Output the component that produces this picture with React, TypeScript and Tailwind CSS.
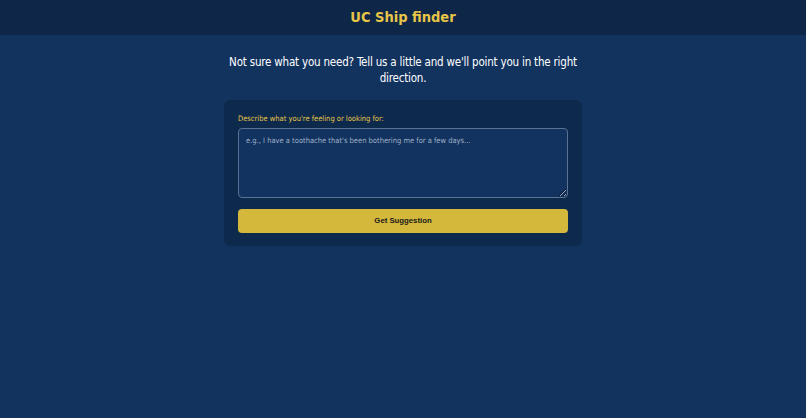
import React from "react";

const cond = '"DejaVu Sans Condensed", "DejaVu Sans", Tahoma, sans-serif';

export default function App() {
  return (
    <div className="min-h-screen w-full bg-[#13335f] flex flex-col" style={{ fontFamily: cond }}>
      <header className="h-[35px] bg-[#0e2748] flex items-center justify-center">
        <h1 className="text-[14.5px] font-bold text-[#e8c547]">UC Ship finder</h1>
      </header>
      <main className="flex flex-col items-center pt-[19px]">
        <p className="w-[370px] text-center text-[11.5px] leading-[16px] tracking-[-0.2px] text-white">
          Not sure what you need? Tell us a little and we'll point you in the right direction.
        </p>
        <div className="mt-[14px] w-[358px] rounded-[6px] bg-[#0d2a4d] px-[14px] pt-[14px] pb-[13px] flex flex-col">
          <label className="text-[7.5px] leading-[10px] text-[#e8c547]">Describe what you're feeling or looking for:</label>
          <textarea
            className="mt-[4px] h-[70px] w-full resize-y rounded-[4px] border border-[#58728f] bg-[#12335f] px-[7px] py-[6px] text-[7.5px] text-white placeholder:text-[#9fb0c6] outline-none"
            style={{ fontFamily: cond }}
            placeholder="e.g., I have a toothache that's been bothering me for a few days..."
          />
          <button className="mt-[11px] h-[24px] w-full rounded-[4px] bg-[#d4b83c] text-[7.75px] font-bold text-[#1a1a1a]" style={{ fontFamily: '"Liberation Sans", Arial, sans-serif' }}>
            Get Suggestion
          </button>
        </div>
      </main>
    </div>
  );
}
